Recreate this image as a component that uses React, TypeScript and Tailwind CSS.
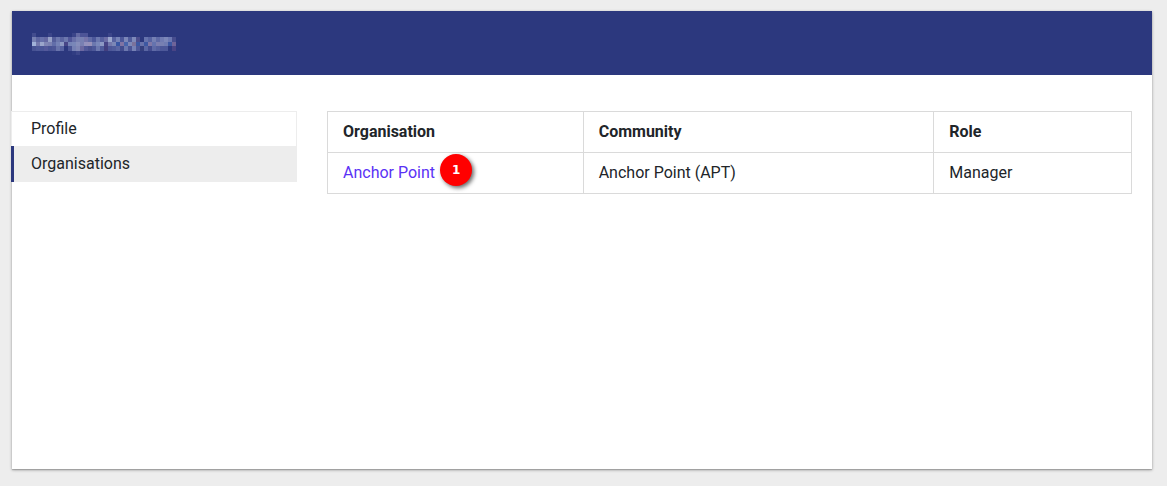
const base = '#2c387e';

const mosaic: { y: number; h: number; cells: string[] }[] = [
  {
    y: 0,
    h: 4,
    cells:
      '454f90 - - - 3d478b - - - - - 3d478b 6a6fa8 50589a 50589a - - - - - 3d478b - - - - - - - - - - - - - - - -'.split(' '),
  },
  {
    y: 4,
    h: 5,
    cells:
      '7f88b8 646ca6 6f78b0 6c6fa8 a3add0 5a639f 737eb3 5f69a5 737eb3 555a9c 6f76ae 8088b8 8088b8 7e7cb0 6872ac 515c9f 7480b5 5b65a3 7273ab a8b4d6 5d68a5 7e8bbd 505b9e 8590bf 5560a0 8792c0 50508f - 6d7ab3 5c68a6 7d88b9 6570ab 7883b8 8590c0 7380b8 4a5090'.split(' '),
  },
  {
    y: 9,
    h: 4,
    cells:
      'adbfe2 7b80b2 a8b2d4 8a8fbc 8489b8 6874ae 7d8bbd 98a4cb 4c4888 7d8cbd 8290bf 9098c2 8288b8 9f9bc4 a39bc0 7480b4 8391c1 98a4cc 4b4687 7b80b2 8490bd 3a5aa8 8a7ba8 4c6ab0 8791be 84799f 3f5ca6 6e79b0 3f5ca6 8a7fac 6c7ab4 8587b6 8088b8 7884b8 3f5ca6 77699c'.split(' '),
  },
  {
    y: 13,
    h: 5,
    cells:
      '4a5596 515c9c 4f5a9b 595d9f 4c5798 515a9a 6f7ab0 5c67a5 - 4e5999 7d88ba 8a90bd 736fa5 565c9d 4a5393 515c9c 7380b5 5560a0 454080 515b9b 5560a0 5f6ba8 454f90 7480b5 4f5999 7f8abb 515b9b 35407f 5f6ba8 464f91 6570ab 5a65a3 515c9c 515c9c - 4d4686'.split(' '),
  },
  {
    y: 18,
    h: 4,
    cells: '- - - - - - - - - - 323e83 3f498c - - - - - - - - - - - - - - - - - - - - - - - -'.split(' '),
  },
];

function RedactedAccount() {
  return (
    <svg
      className="opacity-90"
      width="144"
      height="22"
      viewBox="0 0 144 22"
      shapeRendering="crispEdges"
      role="img"
      aria-label="Account hidden"
    >
      {mosaic.map((row) =>
        row.cells.map((c, i) => (
          <rect key={`${row.y}-${i}`} x={i * 4} y={row.y} width="4" height={row.h} fill={c === '-' ? base : `#${c}`} />
        )),
      )}
    </svg>
  );
}

const columns = ['Organisation', 'Community', 'Role'];

export default function App() {
  return (
    <div className="min-h-screen bg-[#ededed] pt-[11px] pr-[15px] pb-[17px] pl-3 font-[Roboto,sans-serif] text-base leading-6 text-[#212529]">
      <div className="flex min-h-[458px] flex-col bg-white shadow-[0_1px_3px_rgba(0,0,0,0.3),0_1px_1px_rgba(0,0,0,0.16)]">
        <header className="flex h-16 items-center bg-[#2c387e] px-5 pt-0.5">
          <RedactedAccount />
        </header>
        <div className="flex items-start pt-9">
          <nav className="w-1/4 shrink-0" aria-label="Account">
            <a href="#profile" className="-ml-px block border border-b-0 border-[#ededed] px-[19px] py-[5px]">
              Profile
            </a>
            <a
              href="#organisations"
              aria-current="page"
              className="-ml-px block border-l-3 border-[#2c387e] bg-[#ededed] px-[17px] py-1.5"
            >
              Organisations
            </a>
          </nav>
          <main className="min-w-0 grow pr-5 pl-[30px]">
            <table className="w-full table-fixed border-collapse text-left">
              <colgroup>
                <col className="w-[31.8%]" />
                <col className="w-[43.6%]" />
                <col />
              </colgroup>
              <thead>
                <tr>
                  {columns.map((c) => (
                    <th key={c} scope="col" className="border border-[#dadada] px-[15px] py-2 font-bold">
                      {c}
                    </th>
                  ))}
                </tr>
              </thead>
              <tbody>
                <tr>
                  <td className="border border-[#dadada] px-[15px] py-2">
                    <span className="relative inline-block">
                      <a href="#anchor-point" className="text-[#5a32f5]">
                        Anchor Point
                      </a>
                      <span className="absolute -top-[7px] left-full ml-[5px] flex size-8 items-center justify-center rounded-full bg-[#ff0000] font-['DejaVu_Sans',sans-serif] text-xs font-bold text-white shadow-[2px_2px_4px_rgba(0,0,0,0.6)]">
                        1
                      </span>
                    </span>
                  </td>
                  <td className="border border-[#dadada] px-[15px] py-2">Anchor Point (APT)</td>
                  <td className="border border-[#dadada] px-[15px] py-2">Manager</td>
                </tr>
              </tbody>
            </table>
          </main>
        </div>
      </div>
    </div>
  );
}
